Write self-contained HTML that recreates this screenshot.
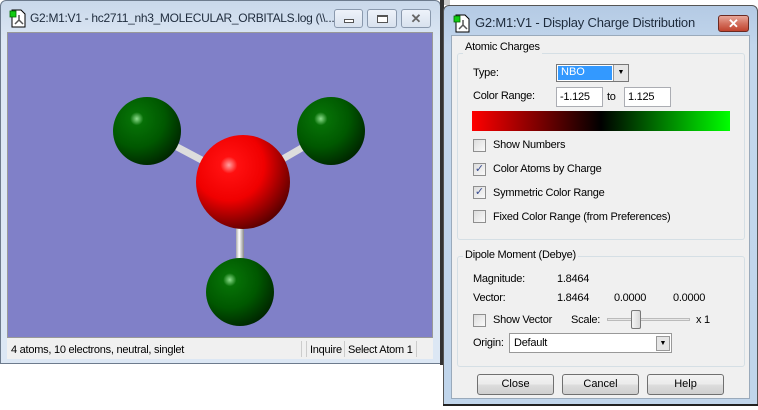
<!DOCTYPE html>
<html><head><meta charset="utf-8"><style>
*{margin:0;padding:0;box-sizing:border-box}
body{width:758px;height:410px;background:#fff;position:relative;overflow:hidden;font-family:"Liberation Sans",sans-serif;font-size:11px;color:#000}
.a{position:absolute}
.t{position:absolute;white-space:nowrap;font-size:11px;line-height:14px;letter-spacing:-0.25px}
.wb{border:1px solid #6d7b8d;border-radius:6px 6px 0 0}
.cap{border:1px solid #8a99ad;border-radius:3px;background:linear-gradient(#eef3fa,#d8e2ee)}
.cb{position:absolute;width:13px;height:13px;border:1px solid #8f8f8f;background:linear-gradient(135deg,#dcdcdc,#fafafa)}
.inp{position:absolute;height:20px;border:1px solid #abadb3;background:#fff;padding:2px 3px;font-size:11px;line-height:14px;letter-spacing:-0.25px}
.btn{position:absolute;height:21px;border:1px solid #707070;border-radius:3px;background:linear-gradient(#f2f2f2 0,#ebebeb 50%,#dddddd 51%,#cfcfcf);text-align:center;line-height:19px;font-size:11px}
.gb{position:absolute;border:1px solid #d5dfe5;border-radius:3px}
.gl{position:absolute;background:#f0f0f0;padding:0 2px;font-size:11px;line-height:14px;letter-spacing:-0.25px}
</style></head><body>
<div class="a wb" style="left:0;top:0;width:441px;height:364px;background:linear-gradient(#c9d8ea,#dce7f4 40px,#dce7f4);"></div>
<svg class="a" style="left:9px;top:9px" width="18" height="19"><path d="M3 1h9l4 4v13H3z" fill="#fff" stroke="#000"/><rect x="1" y="2" width="6" height="6" fill="#1c1" stroke="#060" stroke-width=".8"/><path d="M10 6v5M10 11l-4 4M10 11l4 4" stroke="#555" stroke-width="1.5"/></svg>
<div class="t" style="left:30px;top:11px;font-size:12px;letter-spacing:-0.3px;color:#1e2b3c">G2:M1:V1 - hc2711_nh3_MOLECULAR_ORBITALS.log (\\...</div>
<div class="a cap" style="left:334px;top:9px;width:29px;height:19px"><div class="a" style="left:9px;top:9px;width:10px;height:4px;border:1px solid #555;background:#fff"></div></div>
<div class="a cap" style="left:367px;top:9px;width:30px;height:19px"><div class="a" style="left:9px;top:5px;width:11px;height:8px;border:1px solid #555;border-top-width:2px;background:#fff"></div></div>
<div class="a cap" style="left:401px;top:9px;width:30px;height:19px;text-align:center;color:#666;font-size:13px;line-height:17px;font-weight:bold">✕</div>
<div class="a" style="left:7px;top:32px;width:426px;height:306px;background:#8080c8;border:1px solid #999"></div>
<svg class="a" style="left:7px;top:32px" width="426" height="306">
<defs>
<radialGradient id="r" cx=".35" cy=".32" r=".75"><stop offset="0" stop-color="#ffa0a0"/><stop offset=".12" stop-color="#ff1010"/><stop offset=".5" stop-color="#f00000"/><stop offset="1" stop-color="#500000"/></radialGradient>
<radialGradient id="g" cx=".35" cy=".32" r=".75"><stop offset="0" stop-color="#8fdf8f"/><stop offset=".13" stop-color="#067006"/><stop offset=".55" stop-color="#005800"/><stop offset="1" stop-color="#002200"/></radialGradient>
<linearGradient id="s" x1="0" x2="1"><stop offset="0" stop-color="#aaa"/><stop offset=".4" stop-color="#fff"/><stop offset="1" stop-color="#888"/></linearGradient>
</defs>
<g stroke="#ddd" stroke-width="7"><line x1="140" y1="99" x2="236" y2="150"/><line x1="324" y1="99" x2="236" y2="150"/></g>
<rect x="229" y="190" width="8" height="50" fill="url(#s)"/>
<circle cx="140" cy="99" r="34" fill="url(#g)"/>
<circle cx="324" cy="99" r="34" fill="url(#g)"/>
<circle cx="233" cy="260" r="34" fill="url(#g)"/>
<circle cx="236" cy="150" r="47" fill="url(#r)"/>
</svg>
<div class="a" style="left:7px;top:338px;width:426px;height:21px;background:#f0f0f0"></div>
<div class="t" style="left:11px;top:343px">4 atoms, 10 electrons, neutral, singlet</div>
<div class="a" style="left:301px;top:341px;width:1px;height:16px;background:#ccc"></div>
<div class="a" style="left:306px;top:341px;width:1px;height:16px;background:#ccc"></div>
<div class="t" style="left:310px;top:343px">Inquire</div>
<div class="a" style="left:344px;top:341px;width:1px;height:16px;background:#ccc"></div>
<div class="t" style="left:348px;top:343px">Select Atom 1</div>
<div class="a" style="left:416px;top:341px;width:1px;height:16px;background:#ccc"></div>
<div class="a" style="left:440px;top:0;width:4px;height:365px;background:#333"></div>
<div class="a" style="left:444px;top:0;width:6px;height:5px;background:#ccc"></div>
<div class="a wb" style="left:443px;top:5px;width:315px;height:400px;background:linear-gradient(#b4cae4,#c2d6ec 40px,#c0d5eb);border-color:#555"></div>
<div class="a" style="left:443px;top:404px;width:315px;height:2px;background:#222"></div>
<svg class="a" style="left:453px;top:14px" width="18" height="19"><path d="M3 1h9l4 4v13H3z" fill="#fff" stroke="#000"/><rect x="1" y="2" width="6" height="6" fill="#1c1" stroke="#060" stroke-width=".8"/><path d="M10 6v5M10 11l-4 4M10 11l4 4" stroke="#555" stroke-width="1.5"/></svg>
<div class="t" style="left:475px;top:16px;font-size:13px;letter-spacing:-0.2px;color:#1e2b3c">G2:M1:V1 - Display Charge Distribution</div>
<div class="a" style="left:718px;top:15px;width:31px;height:17px;border:1px solid #6b2a22;border-radius:3px;background:linear-gradient(#e8a79a,#d3705e 50%,#c0432e);color:#fff;text-align:center;font-weight:bold;font-size:13px;line-height:15px">✕</div>
<div class="a" style="left:451px;top:35px;width:299px;height:364px;background:#f0f0f0;border:1px solid #9aaabb"></div>
<div class="gb" style="left:457px;top:53px;width:288px;height:187px"></div>
<div class="gl" style="left:463px;top:40px">Atomic Charges</div>
<div class="t" style="left:473px;top:66px">Type:</div>
<div class="a" style="left:556px;top:64px;width:73px;height:18px;border:1px solid #777;background:#fff"><div class="a" style="left:1px;top:1px;width:54px;height:14px;background:#3399ff;color:#fff;font-size:11px;line-height:13px;padding-left:3px">NBO</div><div class="a" style="left:56px;top:0;width:15px;height:16px;background:#e6e6e6;border-left:1px solid #999;font-size:7px;text-align:center;line-height:16px">▼</div></div>
<div class="t" style="left:473px;top:89px">Color Range:</div>
<div class="inp" style="left:556px;top:87px;width:47px">-1.125</div>
<div class="t" style="left:607px;top:90px">to</div>
<div class="inp" style="left:624px;top:87px;width:47px">1.125</div>
<div class="a" style="left:472px;top:111px;width:258px;height:20px;background:linear-gradient(90deg,#ff0000,#000 50%,#00ff00)"></div>
<div class="cb" style="left:473px;top:139px"></div><div class="t" style="left:493px;top:138px">Show Numbers</div>
<div class="cb" style="left:473px;top:163px;color:#3a4d8f;font-size:11px;line-height:11px;text-align:center">✓</div><div class="t" style="left:493px;top:162px">Color Atoms by Charge</div>
<div class="cb" style="left:473px;top:186px;color:#3a4d8f;font-size:11px;line-height:11px;text-align:center">✓</div><div class="t" style="left:493px;top:186px">Symmetric Color Range</div>
<div class="cb" style="left:473px;top:210px"></div><div class="t" style="left:493px;top:210px">Fixed Color Range (from Preferences)</div>
<div class="gb" style="left:457px;top:256px;width:288px;height:111px"></div>
<div class="gl" style="left:463px;top:248px">Dipole Moment (Debye)</div>
<div class="t" style="left:473px;top:272px">Magnitude:</div><div class="t" style="left:557px;top:272px">1.8464</div>
<div class="t" style="left:473px;top:291px">Vector:</div><div class="t" style="left:557px;top:291px">1.8464</div><div class="t" style="left:614px;top:291px">0.0000</div><div class="t" style="left:673px;top:291px">0.0000</div>
<div class="cb" style="left:473px;top:314px"></div><div class="t" style="left:493px;top:313px">Show Vector</div>
<div class="t" style="left:571px;top:313px">Scale:</div>
<div class="a" style="left:607px;top:318px;width:83px;height:3px;border:1px solid #bbb;background:#e7e7e7"></div>
<div class="a" style="left:631px;top:310px;width:10px;height:19px;border:1px solid #777;border-radius:2px;background:linear-gradient(90deg,#f4f4f4,#d8d8d8)"></div>
<div class="t" style="left:696px;top:313px">x 1</div>
<div class="t" style="left:473px;top:336px">Origin:</div>
<div class="a" style="left:509px;top:333px;width:163px;height:20px;border:1px solid #999;background:#fff"><div class="t" style="left:4px;top:2px">Default</div><div class="a" style="left:146px;top:2px;width:14px;height:15px;background:#e6e6e6;border:1px solid #999;font-size:7px;text-align:center;line-height:14px">▼</div></div>
<div class="btn" style="left:477px;top:374px;width:77px">Close</div>
<div class="btn" style="left:562px;top:374px;width:77px">Cancel</div>
<div class="btn" style="left:647px;top:374px;width:77px">Help</div>
</body></html>
